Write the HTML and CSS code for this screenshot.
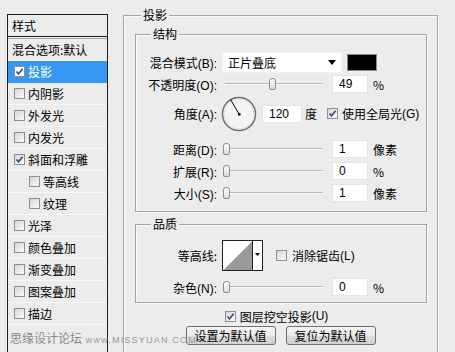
FILE: index.html
```html
<!DOCTYPE html>
<html lang="zh-CN">
<head>
    <meta charset="UTF-8">
    <title>图层样式 - 投影</title>
    <link rel="stylesheet" href="styles.css">
</head>
<body>
<div class="dialog">
    <div class="style-list">
        <div class="list-head">样式</div>
        <div class="list-item first plain">混合选项:默认</div>
        <div class="list-item selected"><span class="cb"><svg viewBox="0 0 9 9" width="9" height="9"><path d="M1.5 4.5 L3.6 6.8 L7.6 1.8" fill="none" stroke="#34477a" stroke-width="1.6"/></svg></span>投影</div>
        <div class="list-item"><span class="cb"></span>内阴影</div>
        <div class="list-item"><span class="cb"></span>外发光</div>
        <div class="list-item"><span class="cb"></span>内发光</div>
        <div class="list-item"><span class="cb"><svg viewBox="0 0 9 9" width="9" height="9"><path d="M1.5 4.5 L3.6 6.8 L7.6 1.8" fill="none" stroke="#34477a" stroke-width="1.6"/></svg></span>斜面和浮雕</div>
        <div class="list-item sub"><span class="cb"></span>等高线</div>
        <div class="list-item sub"><span class="cb"></span>纹理</div>
        <div class="list-item"><span class="cb"></span>光泽</div>
        <div class="list-item"><span class="cb"></span>颜色叠加</div>
        <div class="list-item"><span class="cb"></span>渐变叠加</div>
        <div class="list-item"><span class="cb"></span>图案叠加</div>
        <div class="list-item"><span class="cb"></span>描边</div>
    </div>

    <div class="main">
        <div class="group outer">
            <span class="group-title">投影</span>

            <div class="group inner structure">
                <span class="group-title">结构</span>
                <div class="row first-row">
                    <span class="label">混合模式<span class="key">(B):</span></span>
                    <div class="select">正片叠底<span class="select-arrow"></span></div>
                    <span class="swatch"></span>
                </div>
                <div class="row">
                    <span class="label">不透明度<span class="key">(O):</span></span>
                    <div class="slider"><span class="thumb" style="left: 47px"></span></div>
                    <span class="field">49</span>
                    <span class="unit">%</span>
                </div>
                <div class="row angle">
                    <span class="label">角度<span class="key">(A):</span></span>
                    <svg class="dial" width="36" height="36" viewBox="0 0 36 36">
                        <circle cx="18" cy="18" r="16.5" fill="#f4f4f4" stroke="#6e6e6e" stroke-width="1.5"/>
                        <circle cx="18" cy="18" r="15" fill="none" stroke="#d8d8d8" stroke-width="0.8"/>
                        <line x1="18" y1="18" x2="9.5" y2="3.5" stroke="#000" stroke-width="1"/>
                        <rect x="17" y="17" width="2.5" height="2.5" fill="#000"/>
                    </svg>
                    <span class="field wide">120</span>
                    <span class="unit tight">度</span>
                    <span class="check-label global"><span class="cb"><svg viewBox="0 0 9 9" width="9" height="9"><path d="M1.5 4.5 L3.6 6.8 L7.6 1.8" fill="none" stroke="#34477a" stroke-width="1.6"/></svg></span>使用全局光<span class="key">(G)</span></span>
                </div>
                <div class="row spaced">
                    <span class="label">距离<span class="key">(D):</span></span>
                    <div class="slider"><span class="thumb" style="left: 1px"></span></div>
                    <span class="field">1</span>
                    <span class="unit">像素</span>
                </div>
                <div class="row">
                    <span class="label">扩展<span class="key">(R):</span></span>
                    <div class="slider"><span class="thumb" style="left: 1px"></span></div>
                    <span class="field">0</span>
                    <span class="unit">%</span>
                </div>
                <div class="row">
                    <span class="label">大小<span class="key">(S):</span></span>
                    <div class="slider"><span class="thumb" style="left: 1px"></span></div>
                    <span class="field">1</span>
                    <span class="unit">像素</span>
                </div>
            </div>

            <div class="group inner quality">
                <span class="group-title">品质</span>
                <div class="row contour-row">
                    <span class="label">等高线:</span>
                    <svg class="contour" width="41" height="31" viewBox="0 0 41 31">
                        <rect x="0.5" y="0.5" width="40" height="30" fill="#fff" stroke="#1e1e1e"/>
                        <polygon points="1.5,30 30,1.5 30,30" fill="#9a9a9a"/>
                        <line x1="30.5" y1="0" x2="30.5" y2="31" stroke="#1e1e1e"/>
                        <polygon points="33,13 38,13 35.5,16" fill="#000"/>
                    </svg>
                    <span class="check-label antialias"><span class="cb"></span>消除锯齿<span class="key">(L)</span></span>
                </div>
                <div class="row noise">
                    <span class="label">杂色<span class="key">(N):</span></span>
                    <div class="slider"><span class="thumb" style="left: 1px"></span></div>
                    <span class="field">0</span>
                    <span class="unit">%</span>
                </div>
            </div>

            <div class="knockout">
                <span class="check-label"><span class="cb"><svg viewBox="0 0 9 9" width="9" height="9"><path d="M1.5 4.5 L3.6 6.8 L7.6 1.8" fill="none" stroke="#34477a" stroke-width="1.6"/></svg></span>图层挖空投影<span class="key">(U)</span></span>
            </div>

            <div class="buttons">
                <button class="btn">设置为默认值</button>
                <button class="btn">复位为默认值</button>
            </div>
        </div>
    </div>

    <div class="watermark">思缘设计论坛 <span class="url">www.MISSYUAN.COM</span></div>
</div>
</body>
</html>
```

FILE: styles.css
```css
body {
    margin: 0;
    width: 455px;
    height: 352px;
    overflow: hidden;
    background: #ececec;
    font-family: "Noto Sans CJK SC", "Noto Sans", sans-serif;
    font-size: 12px;
    color: #000;
}

.dialog {
    position: relative;
    display: flex;
    align-items: flex-start;
    height: 352px;
    overflow: hidden;
}

/* left style list */
.style-list {
    margin: 14px 0 0 7px;
    width: 101px;
    height: 338px;
    box-sizing: border-box;
    border-left: 1px solid #1e1e1e;
    border-right: 1px solid #1e1e1e;
    flex: none;
}

.list-head {
    height: 21px;
    line-height: 21px;
    padding-left: 4px;
    border-top: 1px solid #1e1e1e;
    border-bottom: 1px solid #1e1e1e;
    margin-bottom: 1px;
}

.list-item {
    display: flex;
    align-items: center;
    height: 21px;
    padding-left: 6px;
    border-bottom: 1px solid #f7f7f7;
    white-space: nowrap;
}

.list-item.first {
    border-top: 1px solid #a8a8a8;
}

.list-item.plain {
    padding-left: 4px;
}

.list-item.sub {
    padding-left: 21px;
}

.list-item.selected {
    background: #3597f2;
    color: #fff;
    border-bottom-color: #3597f2;
}

.list-item .cb {
    margin-right: 3px;
}

.cb {
    display: inline-flex;
    align-items: center;
    justify-content: center;
    width: 11px;
    height: 11px;
    box-sizing: border-box;
    border: 1px solid #8e8f8f;
    background: linear-gradient(135deg, #d6d6d6, #fbfbfb);
    flex: none;
}

.selected .cb {
    background: #fff;
}

.key {
    font-family: "Liberation Sans", sans-serif;
    font-size: 12px;
}

/* main panel */
.main {
    margin: 15px 0 0 15px;
    width: 315px;
    flex: none;
}

.group {
    border: 1px solid #a3a3a3;
    box-shadow: inset 1px 1px 0 #fafafa, 1px 1px 0 #fafafa;
}

.group-title {
    display: block;
    width: max-content;
    margin: -8px 0 0 15px;
    padding: 0 2px;
    line-height: 14px;
    background: #ececec;
}

.outer {
    height: 338px;
    box-sizing: border-box;
    border-bottom: none;
}

.outer > .group-title {
    margin-left: 17px;
}

.inner {
    margin: 0 10px 0 11px;
}

.structure {
    margin-top: 12px;
    padding-bottom: 7px;
}

.quality {
    margin-top: 12px;
    padding-bottom: 4px;
}

.row {
    display: flex;
    align-items: center;
    height: 22px;
    white-space: nowrap;
}

.row.first-row {
    margin-top: 10px;
}

.label {
    width: 81px;
    text-align: right;
    flex: none;
}

.select {
    display: flex;
    align-items: center;
    margin-left: 5px;
    width: 120px;
    height: 21px;
    box-sizing: border-box;
    padding-left: 5px;
    background: #fff;
    border: 1px solid #f2f2f2;
}

.select-arrow {
    margin-left: auto;
    margin-right: 5px;
    border-left: 4px solid transparent;
    border-right: 4px solid transparent;
    border-top: 5px solid #000;
}

.swatch {
    margin-left: 5px;
    width: 30px;
    height: 17px;
    box-sizing: border-box;
    border: 1px solid #8a8a8a;
    background: #000;
}

.slider {
    position: relative;
    margin-left: 5px;
    width: 101px;
    height: 14px;
    flex: none;
}

.slider::before {
    content: "";
    position: absolute;
    left: 3px;
    right: 0;
    top: 6px;
    border-top: 1px solid #b8b8b8;
    border-bottom: 1px solid #fafafa;
}

.thumb {
    position: absolute;
    top: 1px;
    width: 7px;
    height: 12px;
    box-sizing: border-box;
    border: 1px solid #8c8c8c;
    border-radius: 3px 3px 2px 2px;
    background: linear-gradient(#ffffff, #dcdcdc);
}

.field {
    margin-left: 9px;
    width: 36px;
    height: 18px;
    box-sizing: border-box;
    padding-left: 6px;
    line-height: 16px;
    font-family: "Liberation Sans", sans-serif;
    background: #fff;
    border: 1px solid #e4e4e4;
    flex: none;
}

.field.wide {
    margin-left: 5px;
    width: 40px;
}

.unit {
    margin-left: 5px;
}

.unit.tight {
    margin-left: 3px;
}

.row.angle {
    height: 37px;
}

.dial {
    margin-left: 4px;
    flex: none;
}

.check-label {
    display: flex;
    align-items: center;
}

.check-label .cb {
    margin-right: 4px;
}

.check-label.global {
    margin-left: 10px;
}

.row.spaced {
    margin-top: 6px;
}

.row.contour-row {
    height: 31px;
    margin-top: 9px;
}

.contour {
    margin-left: 5px;
    flex: none;
}

.check-label.antialias {
    margin-left: 13px;
}

.check-label.antialias .cb {
    margin-right: 5px;
}

.row.noise {
    margin-top: 5px;
}

.knockout {
    display: flex;
    justify-content: center;
    height: 16px;
    margin-top: 5px;
    padding-right: 8px;
}

.buttons {
    display: flex;
    justify-content: center;
    gap: 10px;
    margin-top: 2px;
}

.btn {
    width: 90px;
    height: 19px;
    padding: 0;
    font-family: inherit;
    font-size: 12px;
    line-height: 17px;
    color: #000;
    border: 1px solid #707070;
    border-radius: 3px;
    background: linear-gradient(#f4f4f4, #ebebeb 50%, #dddddd 51%, #d0d0d0);
}

.watermark {
    position: absolute;
    left: 10px;
    top: 329px;
    font-size: 12px;
    color: #8a8a8a;
    white-space: nowrap;
}

.watermark .url {
    margin-left: 1px;
    font-family: "Liberation Sans", sans-serif;
    font-size: 9px;
    letter-spacing: 1.2px;
    color: #9a9a9a;
}
```
